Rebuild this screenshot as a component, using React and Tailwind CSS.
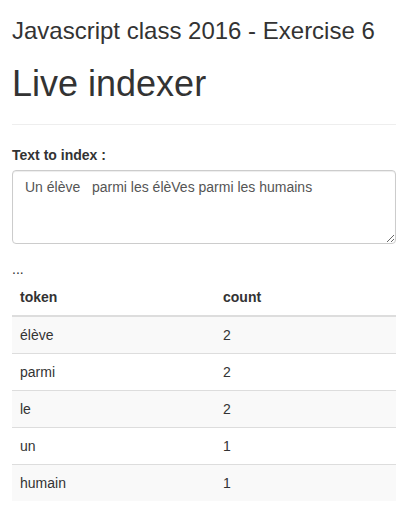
import React from 'react';

const rows = [
  { token: 'élève', count: 2 },
  { token: 'parmi', count: 2 },
  { token: 'le', count: 2 },
  { token: 'un', count: 1 },
  { token: 'humain', count: 1 },
];

export default function App() {
  return (
    <div className="min-h-[525px] bg-white pl-3 pr-4 text-[14px] leading-5 text-[#333] font-['Liberation_Sans',Arial,sans-serif]">
      <h3 className="pt-[18px] text-[24px] leading-[26.4px]">Javascript class 2016 - Exercise 6</h3>
      <h1 className="mt-5 text-[36px] leading-[39.6px]">Live indexer</h1>
      <hr className="mt-5 mb-5 border-[#eee]" />

      <div className="mb-[15px]">
        <label className="mb-[5px] inline-block font-bold">Text to index :</label>
        <textarea
          rows={3}
          defaultValue={'Un élève   parmi les élèVes parmi les humains'}
          className="block h-[74px] w-full rounded border border-[#ccc] px-3 py-[6px] text-[14px] leading-5 text-[#555] shadow-[inset_0_1px_1px_rgba(0,0,0,0.075)] outline-none"
        />
      </div>

      <div>...</div>

      <table className="mb-5 w-full">
        <thead>
          <tr>
            <th className="w-[203px] border-b-2 border-[#ddd] p-2 text-left font-bold">token</th>
            <th className="border-b-2 border-[#ddd] p-2 text-left font-bold">count</th>
          </tr>
        </thead>
        <tbody>
          {rows.map((r, i) => (
            <tr key={r.token} className={i % 2 === 0 ? 'bg-[#f9f9f9]' : ''}>
              <td className={`p-2 ${i > 0 ? 'border-t border-[#ddd]' : ''}`}>{r.token}</td>
              <td className={`p-2 ${i > 0 ? 'border-t border-[#ddd]' : ''}`}>{r.count}</td>
            </tr>
          ))}
        </tbody>
      </table>
    </div>
  );
}
